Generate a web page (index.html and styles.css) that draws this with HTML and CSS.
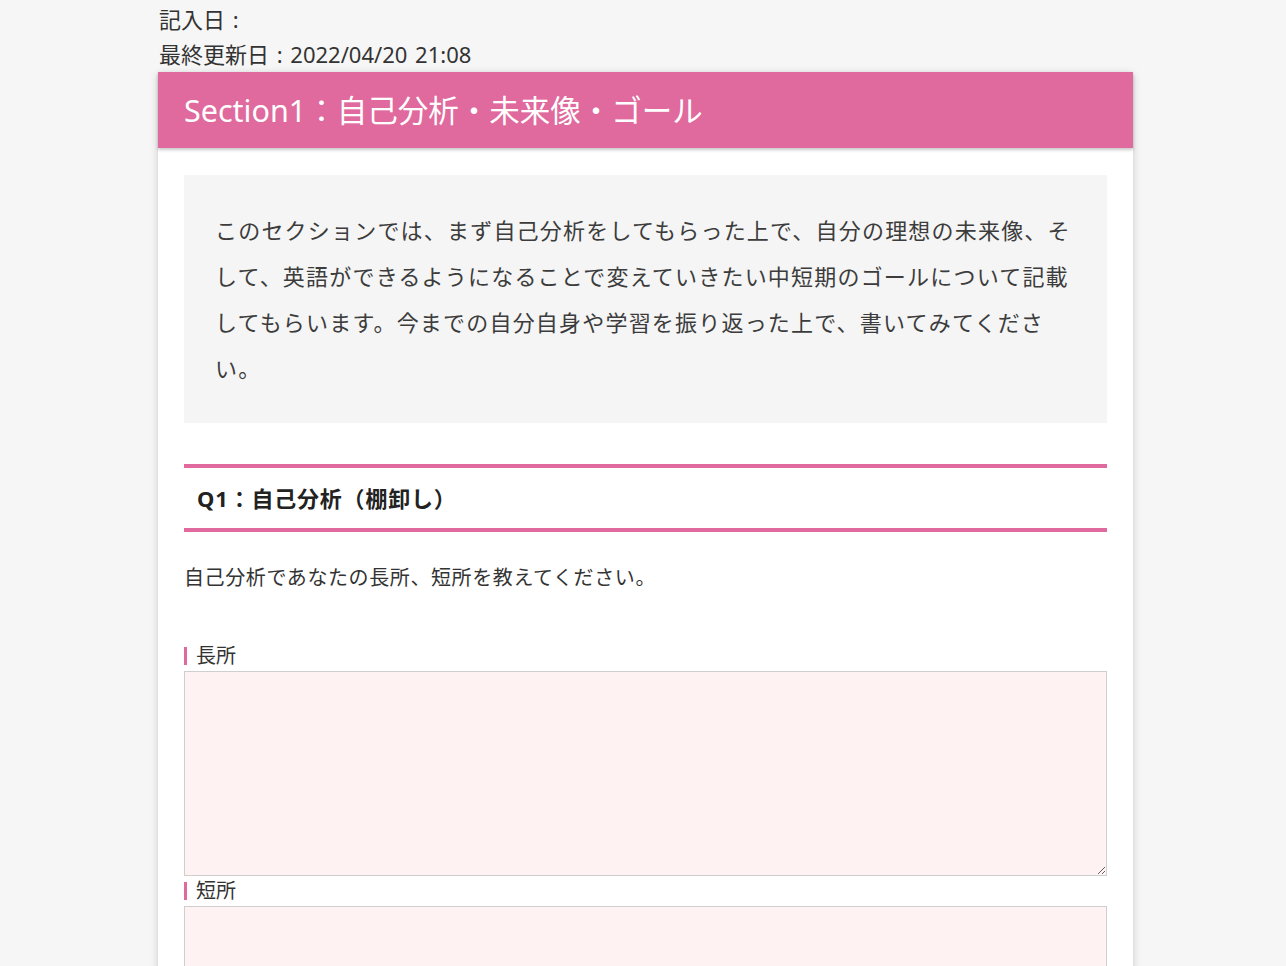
FILE: index.html
```html
<!DOCTYPE html>
<html lang="ja">
<head>
<meta charset="utf-8">
<title>Section1</title>
<link rel="stylesheet" href="styles.css">
</head>
<body>
<div class="page">
  <div class="meta">
    <div class="meta-line">記入日 :</div>
    <div class="meta-line">最終更新日 : 2022/04/20 21:08</div>
  </div>
  <section class="card">
    <h2 class="card-title">Section1：自己分析・未来像・ゴール</h2>
    <div class="card-body">
      <div class="intro">
        <p>このセクションでは、まず自己分析をしてもらった上で、自分の理想の未来像、そして、英語ができるようになることで変えていきたい中短期のゴールについて記載してもらいます。今までの自分自身や学習を振り返った上で、書いてみてください。</p>
      </div>
      <h3 class="q-title">Q1：自己分析（棚卸し）</h3>
      <p class="q-desc">自己分析であなたの長所、短所を教えてください。</p>
      <div class="field">
        <label class="field-label"><span>長所</span></label>
        <textarea class="field-input"></textarea>
      </div>
      <div class="field">
        <label class="field-label"><span>短所</span></label>
        <textarea class="field-input"></textarea>
      </div>
    </div>
  </section>
</div>
</body>
</html>
```
FILE: styles.css
```css
html, body {
  margin: 0;
  padding: 0;
  background: #f6f6f6;
}
body {
  font-family: "Noto Sans", "Noto Sans CJK JP", sans-serif;
  color: #333;
}
.page {
  width: 975px;
  margin-left: 158px;
  padding-top: 2px;
}
.meta {
  padding-left: 1px;
}
.meta-line {
  font-size: 22px;
  word-spacing: 2px;
  line-height: 35px;
  color: #333;
}
.card {
  background: #fff;
  box-shadow: 0 2px 8px rgba(0, 0, 0, 0.18);
}
.card-title {
  margin: 0;
  height: 76px;
  box-sizing: border-box;
  padding-left: 26px;
  background: #e0699d;
  color: #fff;
  font-size: 30.5px;
  font-weight: normal;
  line-height: 76px;
  box-shadow: 0 2px 3px rgba(0, 0, 0, 0.22);
  position: relative;
}
.card-body {
  padding: 27px 26px 40px;
}
.intro {
  background: #f5f5f5;
  padding: 32px 31px;
}
.intro p {
  margin: 0;
  font-size: 22px;
  letter-spacing: 1.2px;
  line-height: 46px;
  color: #3c3c3c;
}
.q-title {
  margin: 41px 0 0;
  border-top: 4px solid #e0699d;
  border-bottom: 4px solid #e0699d;
  height: 68px;
  box-sizing: border-box;
  padding-left: 13px;
  font-size: 22px;
  letter-spacing: 0.8px;
  font-weight: bold;
  line-height: 60px;
  color: #222;
}
.q-desc {
  margin: 30px 0 0;
  font-size: 20px;
  letter-spacing: 0.6px;
  line-height: 32px;
  color: #333;
}
.q-desc + .field {
  margin-top: 47px;
}
.field-label {
  display: flex;
  align-items: center;
  height: 30px;
  font-size: 20px;
  color: #333;
}
.field-label span {
  display: inline-block;
  border-left: 3px solid #e0699d;
  padding-left: 9px;
  line-height: 18px;
}
.field-input {
  display: block;
  width: 100%;
  box-sizing: border-box;
  height: 205px;
  margin: 0;
  background: #fff2f2;
  border: 1px solid #cfcfcf;
  font-family: inherit;
  font-size: 16px;
}
```
